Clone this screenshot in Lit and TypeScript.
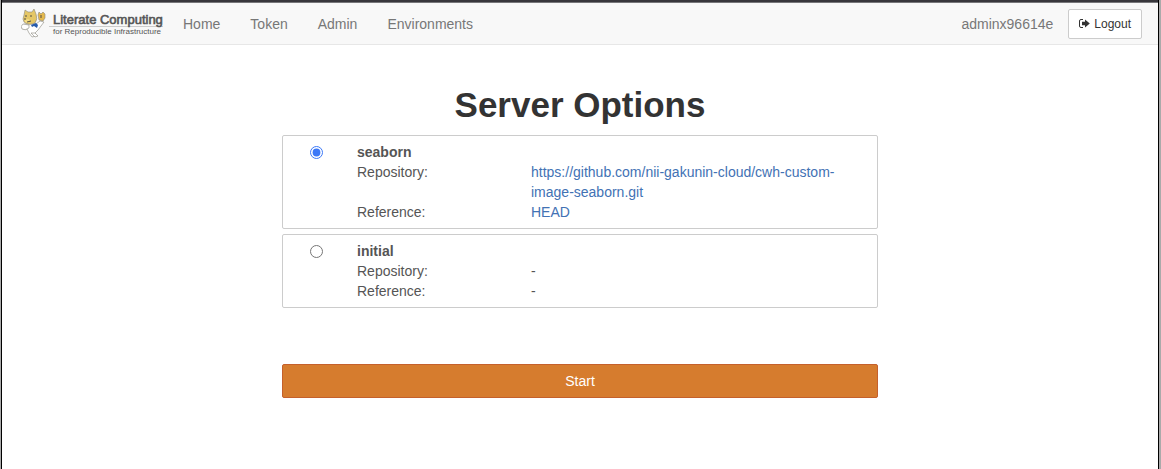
import { LitElement, html, css, svg } from "lit";
import { customElement, property, state } from "lit/decorators.js";

interface ServerImage {
  id: string;
  repository?: string;
  reference?: string;
}

const IMAGES: ServerImage[] = [
  {
    id: "seaborn",
    repository: "https://github.com/nii-gakunin-cloud/cwh-custom-image-seaborn.git",
    reference: "HEAD",
  },
  { id: "initial" },
];

@customElement("site-logo")
class SiteLogo extends LitElement {
  static styles = css`
    :host {
      display: block;
    }
    .logo {
      display: flex;
      align-items: center;
      gap: 2px;
      text-decoration: none;
      color: #555;
    }
    .dog {
      display: block;
      width: 26px;
      height: 30px;
    }
    .words {
      display: grid;
      width: 113px;
      padding-top: 2px;
      white-space: nowrap;
    }
    .title {
      border-bottom: 1px solid #ccc;
      padding-left: 4px;
      font: 13px/13px "Liberation Sans", Arial, sans-serif;
      -webkit-text-stroke: 0.6px #555;
    }
    .sub {
      padding-left: 4px;
      font: 8px/9px "Liberation Sans", Arial, sans-serif;
    }
  `;
  render() {
    return html`<a class="logo" href="#">
      ${svg`<svg class="dog" viewBox="0 0 26 30" aria-hidden="true">
        <g stroke="#8a887e" stroke-width=".6" stroke-linejoin="round">
          <path fill="#fff" d="M7 15Q2 14 1 18Q1 21 6 20L8 24L11 28L15 27L14 24L17 21L23 13L19 12L15 15Z"/>
          <path fill="#fff" d="M2 15Q-1 17 1 20Q4 22 8 19L8 16Z"/>
          <path fill="#e5c766" d="M3 6L4 1L7 3L11 3L13 0L15 5Q17 10 14 14Q8 17 3 13L2 10Z"/>
          <path fill="#e5b94d" d="M17 6L18 3L20 5L22 3L24 5L24 9L22 12L18 11Z"/>
          <path fill="#fff" d="M10 24L14 24L17 27L14 28Z"/>
        </g>
        <path fill="#f4dd83" d="M4 11L7 10L9 11L7 14L4 13Z"/>
        <path fill="#275bab" d="M10 16L15 14L17 16L16 19L13 17L11 18Z"/>
        <path stroke="#444" stroke-width=".9" fill="none" d="M4 7H6M9 7H11M3 10H5M6 13L10 12M20 6V9"/>
      </svg>`}
      <span class="words">
        <span class="title">Literate Computing</span>
        <span class="sub">for Reproducible Infrastructure</span>
      </span>
    </a>`;
  }
}

@customElement("site-navbar")
class SiteNavbar extends LitElement {
  @property() user = "";
  static styles = css`
    :host {
      display: block;
      background: #f8f8f8;
      border-bottom: 1px solid #e7e7e7;
    }
    .bar {
      display: flex;
      align-items: center;
      min-height: 41px;
      padding: 0 16px 0 19px;
    }
    .links {
      display: flex;
      gap: 30px;
      margin: 0 auto 0 21px;
      padding: 0;
      list-style: none;
    }
    .link {
      color: #777;
      text-decoration: none;
    }
    .user {
      color: #777;
      margin-right: 15px;
    }
    .logout {
      display: flex;
      align-items: center;
      gap: 4px;
      height: 30px;
      padding: 0 10px;
      border: 1px solid #ccc;
      border-radius: 2px;
      background: #fff;
      color: #333;
      font: 12px/18px "Liberation Sans", Arial, sans-serif;
    }
    .icon {
      width: 11px;
      height: 9px;
    }
  `;
  render() {
    return html`<nav class="bar">
      <site-logo></site-logo>
      <ul class="links">
        ${["Home", "Token", "Admin", "Environments"].map(
          (name) => html`<li><a class="link" href="#">${name}</a></li>`
        )}
      </ul>
      <span class="user">${this.user}</span>
      <button class="logout" type="button">
        <svg class="icon" viewBox="0 0 11 9" aria-hidden="true">
          <path fill="none" stroke="#333" d="M4 .5H2Q.5 .5 .5 2V7Q.5 8.5 2 8.5H4" />
          <path fill="#333" d="M3 2.8H6V.5L10.8 4.5L6 8.5V6.2H3Z" />
        </svg>
        Logout
      </button>
    </nav>`;
  }
}

@customElement("app-root")
class AppRoot extends LitElement {
  @state() private selected = "seaborn";
  static styles = css`
    :host {
      display: block;
      box-sizing: border-box;
      min-height: 100vh;
      padding: 0 2px 0 1px;
      background: #aaa;
      color: #555;
      font: 14px/20px "Liberation Sans", Arial, sans-serif;
    }
    .window {
      box-sizing: border-box;
      min-height: 100vh;
      border: solid #000;
      border-width: 0 1px;
      background: #fff;
    }
    .edge {
      height: 2px;
      background: #38373c;
      border-bottom: 1px solid #77777a;
    }
    .main {
      max-width: 596px;
      margin: 0 auto;
      padding: 40px 16px;
    }
    .heading {
      margin: 0 0 10px;
      color: #333;
      text-align: center;
      font-size: 35px;
      line-height: 40px;
    }
    .options {
      display: grid;
      gap: 5px;
      margin-bottom: 56px;
    }
    .option {
      display: grid;
      grid-template-columns: 74px 1fr;
      padding: 6px 0;
      border: 1px solid #ccc;
      border-radius: 2px;
    }
    .radio {
      width: 13px;
      height: 13px;
      margin: 4px auto 0 27px;
      accent-color: #3b78f7;
    }
    .name {
      display: block;
      font-weight: bold;
    }
    .details {
      display: grid;
      grid-template-columns: 174px 1fr;
      margin: 0;
      padding-right: 15px;
    }
    .value {
      margin: 0;
    }
    .anchor {
      color: #4272b4;
      text-decoration: none;
    }
    .start {
      display: block;
      width: 100%;
      padding: 6px 12px;
      border: 1px solid #c5602c;
      border-radius: 2px;
      background: #d67c2e;
      color: #fff;
      font: inherit;
    }
  `;

  private value(text?: string) {
    return text ? html`<a class="anchor" href="#">${text}</a>` : "-";
  }

  render() {
    return html`<div class="window">
      <div class="edge"></div>
      <site-navbar user="adminx96614e"></site-navbar>
      <main class="main">
        <h1 class="heading">Server Options</h1>
        <form @submit=${(e: Event) => e.preventDefault()}>
          <div class="options">
            ${IMAGES.map(
              (image) => html`<div class="option">
                <input
                  class="radio"
                  type="radio"
                  name="image"
                  id=${image.id}
                  .checked=${this.selected === image.id}
                  @change=${() => (this.selected = image.id)}
                />
                <div>
                  <label class="name" for=${image.id}>${image.id}</label>
                  <dl class="details">
                    <dt>Repository:</dt>
                    <dd class="value">${this.value(image.repository)}</dd>
                    <dt>Reference:</dt>
                    <dd class="value">${this.value(image.reference)}</dd>
                  </dl>
                </div>
              </div>`
            )}
          </div>
          <button class="start" type="submit">Start</button>
        </form>
      </main>
    </div>`;
  }
}
